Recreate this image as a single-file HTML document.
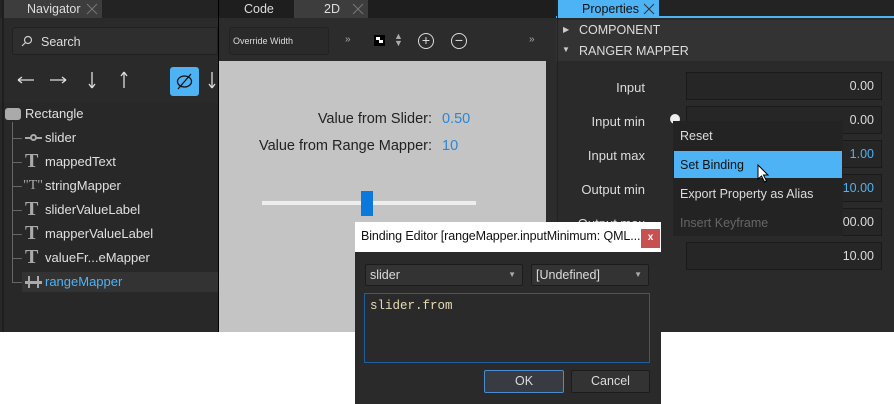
<!DOCTYPE html>
<html><head><style>
*{margin:0;padding:0;box-sizing:border-box}
body{width:894px;height:404px;background:#fff;position:relative;overflow:hidden;font-family:"Liberation Sans",sans-serif;font-size:12px;color:#dcdcdc}
.a{position:absolute}
.tree div{position:absolute;left:45px;font-size:13px;color:#e0e0e0}
.T{position:absolute;left:25px;font-family:"Liberation Serif",serif;font-weight:bold;font-size:20px;color:#aaa;line-height:18px}
.lbl{position:absolute;right:249px;text-align:right;color:#dcdcdc;font-size:13px}
.fld{position:absolute;left:686px;width:196px;height:28px;border:1px solid #1a1a1a;background:#262626;text-align:right;padding-right:7px;line-height:26px;font-size:12.5px}
.x{position:absolute;top:3px;width:12px;height:12px}
</style></head><body>
<!-- left panel -->
<div class="a" style="left:0;top:0;width:218px;height:332px;background:#2a2a2a"></div>
<div class="a" style="left:0;top:0;width:218px;height:18px;background:#232323"></div>
<div class="a" style="left:2px;top:0;width:100px;height:18px;background:#3d3d3d;color:#ddd;font-size:12.5px;line-height:18px;padding-left:25px">Navigator</div>
<svg class="x" style="left:86px" viewBox="0 0 12 12"><path d="M1 1L11 11M11 1L1 11" stroke="#777" stroke-width="1"/></svg>
<div class="a" style="left:12px;top:27px;width:206px;height:28px;border:1px solid #202020;border-radius:3px;background:#2e2e2e"></div>
<svg class="a" style="left:21px;top:35px" width="12" height="12"><circle cx="7" cy="5" r="3.5" fill="none" stroke="#ccc" stroke-width="1.2"/><path d="M4.5 7.5L1 11" stroke="#ccc" stroke-width="1.2"/></svg>
<div class="a" style="left:41px;top:35px;font-size:12.5px;color:#ddd">Search</div>
<svg class="a" style="left:14px;top:70px" width="120" height="20" stroke="#ddd" stroke-width="1.3" fill="none">
<path d="M4 10H20M4 10L8 7M4 10L8 13"/><path d="M36 10H52M52 10L48 7M52 10L48 13"/><path d="M78 2V18M78 18L75 14M78 18L81 14"/><path d="M110 2V18M110 2L107 6M110 2L113 6"/></svg>
<div class="a" style="left:170px;top:67px;width:29px;height:29px;background:#4db3f5;border-radius:3px"></div>
<svg class="a" style="left:174px;top:71px" width="21" height="21" fill="none" stroke="#111" stroke-width="1.3"><ellipse cx="10.5" cy="10.5" rx="7" ry="5.5"/><path d="M4 18L17 3"/></svg>
<svg class="a" style="left:206px;top:70px" width="12" height="20" stroke="#ddd" stroke-width="1.3"><path d="M6 2V18M6 18L3 14M6 18L9 14"/></svg>
<div class="a" style="left:0;top:102px;width:218px;height:230px;background:#282828"></div>
<div class="a" style="left:2px;top:0;width:2px;height:332px;background:#1e1e1e"></div>
<div class="a" style="left:5px;top:108px;width:16px;height:12px;background:#aaa;border-radius:3px"></div>
<div class="a" style="left:25px;top:106px;font-size:13px;color:#e0e0e0">Rectangle</div>
<div class="a" style="left:12px;top:122px;width:1px;height:160px;background:#666"></div>
<div class="a" style="left:22px;top:272px;width:196px;height:20px;background:#333"></div>
<div class="tree">
<div style="top:130px">slider</div>
<div style="top:154px">mappedText</div>
<div style="top:178px">stringMapper</div>
<div style="top:202px">sliderValueLabel</div>
<div style="top:226px">mapperValueLabel</div>
<div style="top:250px">valueFr...eMapper</div>
<div style="top:274px;color:#4db3f5">rangeMapper</div>
</div>
<div class="a" style="left:12px;top:138px;width:10px;height:1px;background:#666;box-shadow:0 24px #666,0 48px #666,0 72px #666,0 96px #666,0 120px #666,0 144px #666"></div>
<div class="a" style="left:25px;top:137px;width:17px;height:2px;background:#aaa"></div>
<div class="a" style="left:30px;top:134px;width:7px;height:7px;border:2px solid #aaa;border-radius:50%;background:#282828"></div>
<div class="T" style="top:152px">T</div>
<div class="T" style="top:177px;font-weight:normal;font-size:14px;left:23px">"T"</div>
<div class="T" style="top:200px">T</div>
<div class="T" style="top:224px">T</div>
<div class="T" style="top:248px">T</div>
<div class="a" style="left:25px;top:281px;width:17px;height:3px;background:#aaa"></div>
<div class="a" style="left:28px;top:276px;width:2px;height:12px;background:#aaa;box-shadow:9px 0 #aaa"></div>
<div class="a" style="left:218px;top:0;width:1px;height:332px;background:#000"></div>
<!-- center -->
<div class="a" style="left:219px;top:0;width:337px;height:332px;background:#2c2c2c"></div>
<div class="a" style="left:219px;top:0;width:337px;height:18px;background:#1e1e1e"></div>
<div class="a" style="left:219px;top:0;width:75px;height:18px;color:#ddd;font-size:12.5px;line-height:18px;padding-left:25px">Code</div>
<div class="a" style="left:294px;top:0;width:74px;height:18px;background:#3d3d3d;color:#ddd;font-size:12.5px;line-height:18px;padding-left:30px">2D</div>
<svg class="x" style="left:352px" viewBox="0 0 12 12"><path d="M1 1L11 11M11 1L1 11" stroke="#777" stroke-width="1"/></svg>
<div class="a" style="left:229px;top:27px;width:100px;height:28px;border:1px solid #222;border-radius:3px;background:#2a2a2a;font-size:9px;line-height:26px;padding-left:3px;color:#ddd">Override Width</div>
<div class="a" style="left:345px;top:34px;font-size:10px;color:#aaa">»</div>
<div class="a" style="left:374px;top:35px;width:11px;height:11px;background:#000"></div>
<div class="a" style="left:376px;top:37px;width:4px;height:3px;background:#fff;box-shadow:3px 3px #fff"></div>
<div class="a" style="left:394px;top:33px;font-size:9px;color:#aaa;line-height:7px">▲<br>▼</div>
<div class="a" style="left:418px;top:33px;width:16px;height:16px;border:1.5px solid #ddd;border-radius:50%;text-align:center;line-height:12px;font-size:14px">+</div>
<div class="a" style="left:451px;top:33px;width:16px;height:16px;border:1.5px solid #ddd;border-radius:50%;text-align:center;line-height:12px;font-size:14px">−</div>
<div class="a" style="left:529px;top:34px;font-size:10px;color:#aaa">»</div>
<div class="a" style="left:219px;top:61px;width:327px;height:271px;background:#c4c4c4"></div>
<div class="a" style="left:260px;top:111px;width:172px;text-align:right;color:#222;font-size:14.5px">Value from Slider:</div>
<div class="a" style="left:442px;top:111px;color:#2c86d6;font-size:14.5px">0.50</div>
<div class="a" style="left:240px;top:138px;width:192px;text-align:right;color:#222;font-size:14.5px">Value from Range Mapper:</div>
<div class="a" style="left:442px;top:138px;color:#2c86d6;font-size:14.5px">10</div>
<div class="a" style="left:262px;top:201px;width:214px;height:4px;background:#eee"></div>
<div class="a" style="left:361px;top:191px;width:12px;height:25px;background:#0a78dc"></div>
<!-- right -->
<div class="a" style="left:556px;top:0;width:338px;height:332px;background:#2a2a2a"></div>
<div class="a" style="left:556px;top:0;width:338px;height:18px;background:#232323;border-bottom:2px solid #4db3f5"></div>
<div class="a" style="left:557px;top:0;width:102px;height:18px;background:#4db3f5;color:#111;font-size:12.5px;line-height:18px;padding-left:25px">Properties</div>
<svg class="x" style="left:643px" viewBox="0 0 12 12"><path d="M1 1L11 11M11 1L1 11" stroke="#333" stroke-width="1"/></svg>
<div class="a" style="left:556px;top:20px;width:338px;height:41px;background:#333"></div>
<div class="a" style="left:563px;top:25px;font-size:8px;color:#ccc">▶</div>
<div class="a" style="left:579px;top:23px;font-size:12.5px;color:#ddd">COMPONENT</div>
<div class="a" style="left:562px;top:45px;font-size:8px;color:#ccc">▼</div>
<div class="a" style="left:579px;top:44px;font-size:12.5px;color:#ddd">RANGER MAPPER</div>
<div class="a" style="left:557px;top:0;width:1px;height:332px;background:#222"></div>
<div class="lbl" style="top:80px">Input</div>
<div class="lbl" style="top:114px">Input min</div>
<div class="lbl" style="top:148px">Input max</div>
<div class="lbl" style="top:182px">Output min</div>
<div class="lbl" style="top:216px">Output max</div>
<div class="a" style="left:670px;top:114px;width:10px;height:10px;border-radius:50%;background:#eee"></div>
<div class="fld" style="top:72px">0.00</div>
<div class="fld" style="top:106px">0.00</div>
<div class="fld" style="top:140px;color:#4db3f5">1.00</div>
<div class="fld" style="top:174px;color:#4db3f5">10.00</div>
<div class="fld" style="top:208px">100.00</div>
<div class="fld" style="top:242px">10.00</div>
<div class="a" style="left:673px;top:121px;width:170px;height:115px;background:#232323"></div>
<div class="a" style="left:674px;top:151px;width:168px;height:27px;background:#4db3f5"></div>
<div class="a" style="left:680px;top:129px;color:#ddd;font-size:12.5px">Reset</div>
<div class="a" style="left:680px;top:158px;color:#111;font-size:12.5px">Set Binding</div>
<div class="a" style="left:680px;top:187px;color:#ddd;font-size:12.5px">Export Property as Alias</div>
<div class="a" style="left:680px;top:216px;color:#666;font-size:12.5px">Insert Keyframe</div>
<svg class="a" style="left:757px;top:164px" width="14" height="20"><path d="M1 1 L1 15 L4.5 12 L7.5 18 L9.5 17 L6.5 11 L11 11 Z" fill="#fff" stroke="#000"/></svg>
<!-- dialog -->
<div class="a" style="left:355px;top:222px;width:306px;height:182px;background:#2a2a2a"></div>
<div class="a" style="left:355px;top:222px;width:306px;height:30px;background:#fff"></div>
<div class="a" style="left:361px;top:229px;color:#111;font-size:12.5px;letter-spacing:-0.1px">Binding Editor [rangeMapper.inputMinimum: QML...</div>
<div class="a" style="left:641px;top:229px;width:19px;height:19px;background:#c75050;color:#fff;font-size:10px;text-align:center;line-height:18px;font-weight:bold">x</div>
<div class="a" style="left:365px;top:264px;width:158px;height:22px;border:1px solid #1c1c1c;border-radius:2px;background:#333;padding-left:4px;line-height:20px;font-size:12.5px">slider<span style="position:absolute;right:6px;font-size:8px;color:#aaa">▼</span></div>
<div class="a" style="left:531px;top:264px;width:118px;height:22px;border:1px solid #1c1c1c;border-radius:2px;background:#333;padding-left:4px;line-height:20px;font-size:12.5px">[Undefined]<span style="position:absolute;right:6px;font-size:8px;color:#aaa">▼</span></div>
<div class="a" style="left:364px;top:293px;width:286px;height:70px;border:1px solid #1f5fa0;background:#2a2a2a;padding:5px 5px;font-family:'Liberation Mono',monospace;font-size:12.5px;color:#e6dcb4">slider.from</div>
<div class="a" style="left:484px;top:370px;width:80px;height:23px;border:1px solid #4a8cd0;border-radius:2px;background:#383c42;text-align:center;line-height:21px;font-size:12.5px">OK</div>
<div class="a" style="left:571px;top:370px;width:79px;height:23px;border:1px solid #1c1c1c;border-radius:2px;background:#333;text-align:center;line-height:21px;font-size:12.5px">Cancel</div>
</body></html>
